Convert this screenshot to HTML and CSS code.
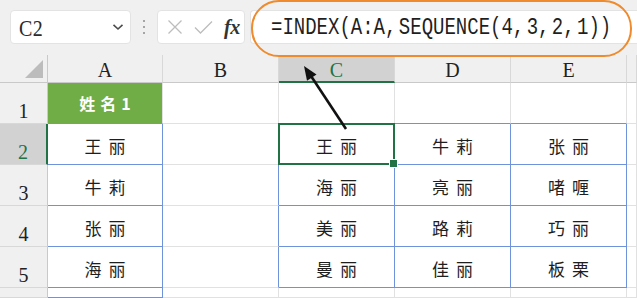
FILE: index.html
```html
<!DOCTYPE html>
<html lang="zh">
<head>
<meta charset="utf-8">
<title>INDEX SEQUENCE</title>
<link rel="stylesheet" href="styles.css">
</head>
<body>
<div class="app">
  <div class="toolbar">
    <div class="namebox">
      <span class="ref">C2</span>
      <svg class="chev" width="12" height="8" viewBox="0 0 12 8"><path d="M1.5 1.8 L6 6 L10.5 1.8" fill="none" stroke="#4a4a4a" stroke-width="1.6"/></svg>
    </div>
    <div class="sep"><i></i><i></i><i></i></div>
    <div class="fxbox">
      <svg class="ico" width="16" height="16" viewBox="0 0 16 16"><path d="M1.5 1.5 L14.5 14.5 M14.5 1.5 L1.5 14.5" stroke="#bdbdbd" stroke-width="1.3" fill="none"/></svg>
      <svg class="ico" width="19" height="15" viewBox="0 0 19 15"><path d="M1 7.5 L6.5 13 L18 1.5" stroke="#bdbdbd" stroke-width="1.3" fill="none"/></svg>
      <span class="fx">fx</span>
    </div>
    <div class="formula"><span class="ftext">=INDEX(A:A, SEQUENCE(4, 3, 2, 1))</span></div>
  </div>
  <div class="ring"></div>

  <div class="sheet">
    <div class="corner"><span class="tri"></span></div>
    <div class="ch">A</div>
    <div class="ch">B</div>
    <div class="ch sel">C</div>
    <div class="ch">D</div>
    <div class="ch">E</div>
    <div class="ch last"></div>

    <div class="rh">1</div>
    <div class="c title bb">姓名1</div>
    <div class="c"></div>
    <div class="c bb"></div>
    <div class="c bb"></div>
    <div class="c bb"></div>
    <div class="c"></div>

    <div class="rh sel">2</div>
    <div class="c blue">王丽</div>
    <div class="c br"></div>
    <div class="c blue active">王丽</div>
    <div class="c blue">牛莉</div>
    <div class="c blue">张丽</div>
    <div class="c"></div>

    <div class="rh">3</div>
    <div class="c blue">牛莉</div>
    <div class="c br"></div>
    <div class="c blue">海丽</div>
    <div class="c blue">亮丽</div>
    <div class="c blue">啫喱</div>
    <div class="c"></div>

    <div class="rh">4</div>
    <div class="c blue">张丽</div>
    <div class="c br"></div>
    <div class="c blue">美丽</div>
    <div class="c blue">路莉</div>
    <div class="c blue">巧丽</div>
    <div class="c"></div>

    <div class="rh">5</div>
    <div class="c blue">海丽</div>
    <div class="c br"></div>
    <div class="c blue">曼丽</div>
    <div class="c blue">佳丽</div>
    <div class="c blue">板栗</div>
    <div class="c"></div>

    <div class="rh"></div>
    <div class="c blue"></div>
    <div class="c"></div>
    <div class="c"></div>
    <div class="c"></div>
    <div class="c"></div>
    <div class="c"></div>
  </div>

  <svg class="arrow" width="637" height="298" viewBox="0 0 637 298">
    <line x1="346" y1="129" x2="311" y2="76" stroke="#111" stroke-width="2.6"/>
    <polygon points="304,66 316.5,74.5 307,80.8" fill="#111"/>
  </svg>
</div>
</body>
</html>
```

FILE: styles.css
```css
* { box-sizing: border-box; margin: 0; padding: 0; }

html, body {
  width: 637px;
  height: 298px;
  overflow: hidden;
  background: #ffffff;
}

body {
  font-family: "Noto Sans CJK SC", sans-serif;
  color: #222;
}

.app {
  position: relative;
  width: 637px;
  height: 298px;
}

/* ---------- toolbar ---------- */
.toolbar {
  display: flex;
  align-items: center;
  height: 55px;
  padding: 10px 0 11px 10px;
  background: #f0f0f0;
}

.namebox {
  width: 121px;
  height: 34px;
  background: #fff;
  border: 1px solid #e3e3e3;
  border-radius: 4px;
  display: flex;
  align-items: center;
  justify-content: space-between;
  padding: 0 6px 0 8px;
}

.ref {
  display: inline-block;
  font-family: "Liberation Serif", serif;
  font-size: 20px;
  color: #2b2b2b;
  transform: scaleY(1.12);
  letter-spacing: 0.5px;
  margin-top: 2px;
}

.sep {
  width: 26px;
  display: flex;
  flex-direction: column;
  align-items: center;
  gap: 4px;
}
.sep i {
  display: block;
  width: 2px;
  height: 2px;
  background: #8c8c8c;
  border-radius: 1px;
}

.fxbox {
  width: 88px;
  height: 34px;
  background: #fff;
  border: 1px solid #e3e3e3;
  border-radius: 4px;
  display: flex;
  align-items: center;
  padding-left: 9px;
  gap: 11px;
}
.fx {
  font-family: "Liberation Serif", serif;
  font-style: italic;
  font-weight: bold;
  font-size: 20px;
  color: #333;
  letter-spacing: -0.5px;
}

.formula {
  flex: 1;
  height: 34px;
  margin-left: 5px;
  background: #fff;
  border: 1px solid #e3e3e3;
  border-right: none;
  border-radius: 4px 0 0 4px;
  display: flex;
  align-items: center;
  padding-left: 20px;
}
.ftext {
  display: inline-block;
  font-family: "Liberation Mono", monospace;
  font-size: 19px;
  word-spacing: -9px;
  color: #1f1f1f;
  transform: scaleY(1.3);
  white-space: pre;
}

.ring {
  position: absolute;
  left: 251px;
  top: 0;
  width: 381px;
  height: 57px;
  border: 2.5px solid #ef8b2c;
  border-radius: 28px;
  z-index: 3;
}

/* ---------- sheet ---------- */
.sheet {
  display: grid;
  grid-template-columns: 48px 115px 116px 116px 116px 116px 1fr;
  grid-template-rows: 28px repeat(5, 41px) 1fr;
  height: 243px;
}

.corner {
  background: #f0f0f0;
  border-right: 1px solid #c9c9c9;
  border-bottom: 1px solid #c9c9c9;
  display: flex;
  justify-content: flex-end;
  align-items: flex-end;
  padding: 0 4px 4px 0;
}
.tri {
  width: 0;
  height: 0;
  border-left: 18px solid transparent;
  border-bottom: 18px solid #bcbcbc;
}

.ch {
  background: #f0f0f0;
  border-right: 1px solid #d8d8d8;
  border-bottom: 1px solid #c9c9c9;
  font-family: "Liberation Serif", serif;
  font-size: 20px;
  color: #222;
  display: flex;
  justify-content: center;
  align-items: center;
  padding-top: 3px;
}
.ch.sel {
  background: #d2d2d2;
  color: #217346;
  border-bottom: 2px solid #217346;
  padding-top: 4px;
}

.rh {
  background: #f0f0f0;
  border-right: 1px solid #c9c9c9;
  border-bottom: 1px solid #d8d8d8;
  font-family: "Liberation Serif", serif;
  font-size: 20px;
  line-height: 20px;
  color: #222;
  display: flex;
  justify-content: center;
  align-items: flex-end;
  padding-bottom: 2px;
}
.rh.sel {
  background: #d2d2d2;
  color: #217346;
  border-right: 2px solid #217346;
}

.c {
  border-right: 1px solid #e1e1e1;
  border-bottom: 1px solid #e1e1e1;
  font-size: 17px;
  line-height: 20px;
  letter-spacing: 7px;
  padding-left: 7px;
  padding-bottom: 8px;
  color: #1e1e1e;
  display: flex;
  justify-content: center;
  align-items: flex-end;
}

.c.title {
  background: #70ad47;
  color: #ffffff;
  font-weight: bold;
  font-size: 16px;
  letter-spacing: 5px;
  padding-left: 5px;
  padding-bottom: 10px;
}

.c.blue {
  border-right-color: #6f93da;
  border-bottom-color: #6f93da;
}
.c.br { border-right-color: #6f93da; }
.c.bb { border-bottom-color: #6f93da; }

.c.active {
  position: relative;
}
.c.active::before {
  content: "";
  position: absolute;
  left: -1px;
  top: -1px;
  right: -1px;
  bottom: -1px;
  border: 2px solid #217346;
}
.c.active::after {
  content: "";
  position: absolute;
  right: -4px;
  bottom: -4px;
  width: 7px;
  height: 7px;
  background: #217346;
  border: 1px solid #fff;
  z-index: 2;
}

.arrow {
  position: absolute;
  left: 0;
  top: 0;
  z-index: 4;
}
```
